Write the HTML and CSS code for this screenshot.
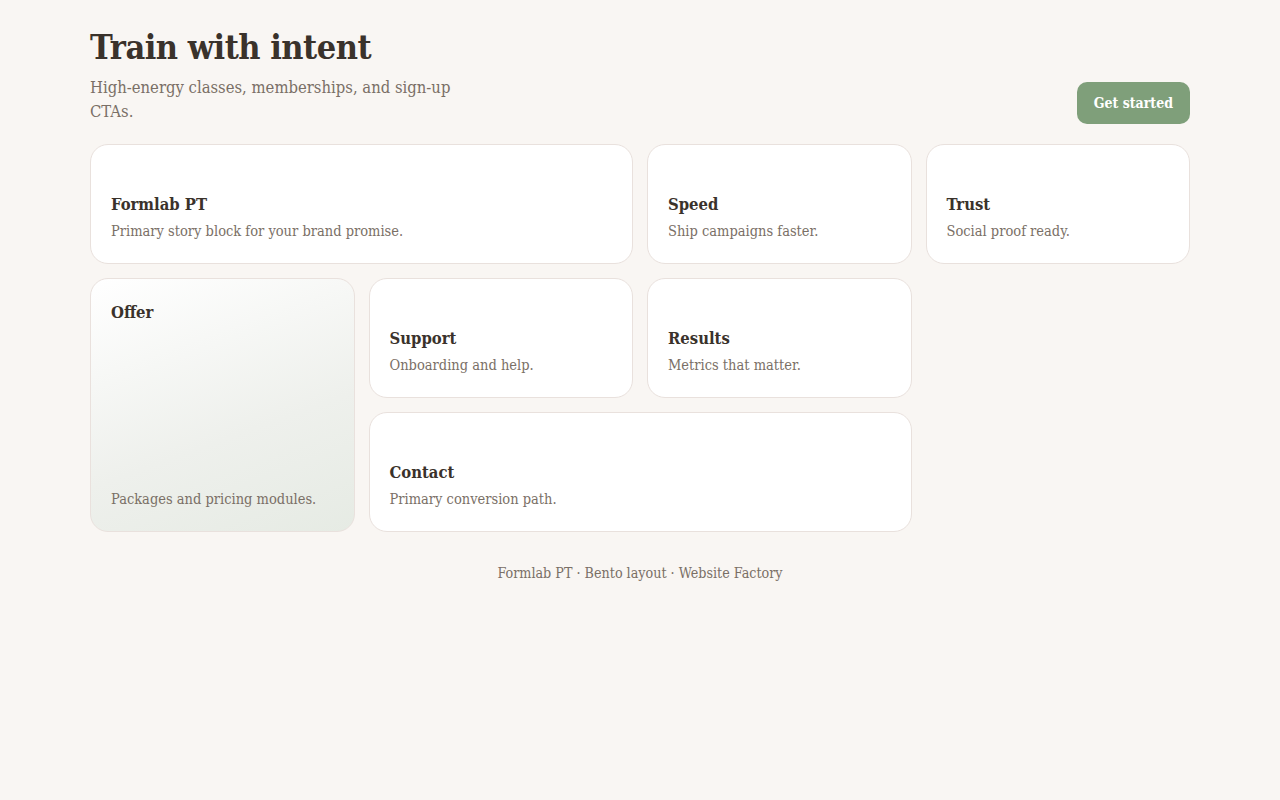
FILE: index.html
```html
<!DOCTYPE html>
<html>
<head>
    <meta charset="utf-8">
    <link rel="stylesheet" href="styles.css">
</head>
<body>
<div class="page">
    <div class="header">
        <div>
            <h1 class="title">Train with intent</h1>
            <p class="lead">High-energy classes, memberships, and sign-up CTAs.</p>
        </div>
        <button class="cta">Get started</button>
    </div>

    <!-- Bento grid -->
    <div class="bento">
        <div class="card card-wide">
            <div class="card-title">Formlab PT</div>
            <div class="card-text">Primary story block for your brand promise.</div>
        </div>
        <div class="card">
            <div class="card-title">Speed</div>
            <div class="card-text">Ship campaigns faster.</div>
        </div>
        <div class="card">
            <div class="card-title">Trust</div>
            <div class="card-text">Social proof ready.</div>
        </div>
        <div class="card card-tall">
            <div class="card-title">Offer</div>
            <div class="card-text">Packages and pricing modules.</div>
        </div>
        <div class="card">
            <div class="card-title">Support</div>
            <div class="card-text">Onboarding and help.</div>
        </div>
        <div class="card">
            <div class="card-title">Results</div>
            <div class="card-text">Metrics that matter.</div>
        </div>
        <div class="card card-contact">
            <div class="card-title">Contact</div>
            <div class="card-text">Primary conversion path.</div>
        </div>
    </div>

    <div class="footer">Formlab PT · Bento layout · Website Factory</div>
</div>
</body>
</html>
```

FILE: styles.css
```css
body {
    margin: 0;
    background: #f9f6f3;
    color: #3a322b;
    font-family: "DejaVu Serif", "Liberation Serif", serif;
    font-stretch: condensed;
}
.page {
    width: 1100px;
    margin: 0 auto;
    padding-top: 26px;
}
.header {
    display: flex;
    align-items: flex-end;
    justify-content: space-between;
    margin-bottom: 20px;
}
.title {
    margin: 0 0 8px;
    font-size: 34px;
    line-height: 42px;
    font-weight: bold;
    letter-spacing: -0.5px;
    color: #3a322b;
}
.lead {
    margin: 0;
    max-width: 400px;
    font-size: 16.5px;
    line-height: 24px;
    color: #7a6f66;
}
.cta {
    height: 42px;
    padding: 0 17px;
    background: #7f9f7a;
    color: white;
    border: none;
    border-radius: 10px;
    font-family: inherit;
    font-stretch: inherit;
    font-size: 14px;
    font-weight: bold;
    cursor: pointer;
}

.bento {
    display: grid;
    grid-template-columns: repeat(4, 1fr);
    grid-auto-rows: 120px;
    gap: 14px;
}
.card {
    display: flex;
    flex-direction: column;
    justify-content: flex-end;
    padding: 20px 20px 22px;
    background: white;
    border: 1px solid #e9e1dd;
    border-radius: 18px;
}
.card-wide {
    grid-column: span 2;
}
.card-tall {
    grid-row: span 2;
    justify-content: space-between;
    padding-top: 22px;
    background: linear-gradient(160deg, #ffffff 0%, #eef0ec 60%, #e6ebe4 100%);
}
.card-contact {
    grid-column: 2 / span 2;
}
.card-title {
    font-size: 16.5px;
    line-height: 24px;
    font-weight: bold;
    color: #3a322b;
}
.card-text {
    margin-top: 4px;
    font-size: 14.5px;
    line-height: 20px;
    color: #7a6f66;
}
.footer {
    margin-top: 33px;
    text-align: center;
    font-size: 14.2px;
    color: #7a6f66;
}
```
